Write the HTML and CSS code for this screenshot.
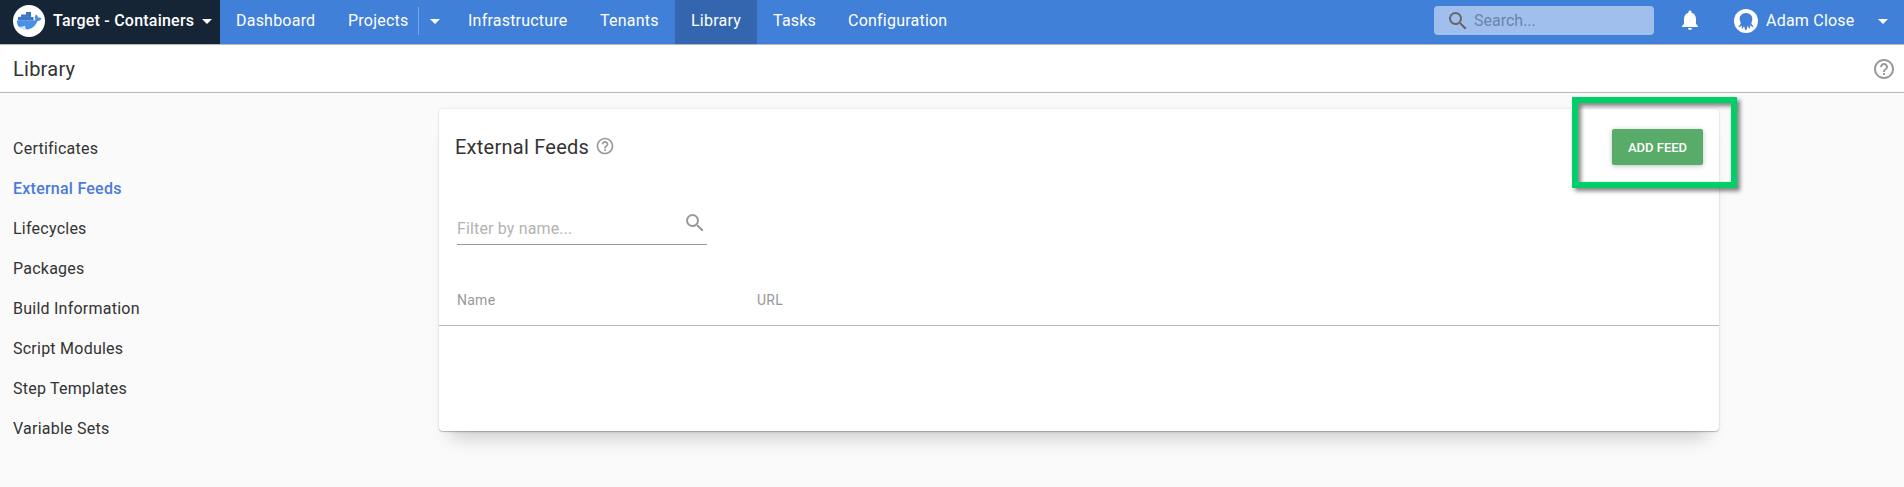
FILE: index.html
```html
<!DOCTYPE html>
<html lang="en">
<head>
<meta charset="utf-8">
<title>Library - External Feeds</title>
<link rel="stylesheet" href="styles.css">
</head>
<body>
<header class="navbar">
  <div class="space">
    <svg class="space-logo" width="32" height="32" viewBox="0 0 32 32"><circle cx="16" cy="16" r="16" fill="#fff"/><path fill="#4a8fe6" d="M4 15.500H21.500C22.600 15 22.400 13 21.700 11.600L23 9.500C24.500 10.500 25 11.500 25 12.700C26.500 12.400 27.600 12.800 28.500 13.600C27.800 15.300 26.300 16 24.500 15.900C22.500 21 18.500 24.500 12.500 24.500C7.500 24.500 3.600 21.500 4 15.500Z"/><path fill="#3c74c4" d="M5 15.500V12H8V9.500H13V7H18V12H20.500V15.500Z"/><path stroke="#4a8fe6" stroke-width=".3" d="M8 12v3.500M11 9.500v6M14.500 7v8.500M5 12h13M17.500 12v3.500"/><path fill="#fff" d="M5 21.500C7.500 22 10 21.600 12 20.400C12 22.500 13 24 14.500 24.600H9Z" opacity=".75"/></svg>
    <span class="space-name">Target - Containers</span>
    <svg class="caret" width="10" height="5" viewBox="0 0 10 5"><path d="M0 0h10L5 5z"/></svg>
  </div>
  <nav class="menu">
    <a class="item dashboard">Dashboard</a>
    <a class="item projects">Projects</a>
    <span class="split"><svg class="caret" width="10" height="5" viewBox="0 0 10 5"><path d="M0 0h10L5 5z"/></svg></span>
    <a class="item infrastructure">Infrastructure</a>
    <a class="item tenants">Tenants</a>
    <a class="item library active">Library</a>
    <a class="item tasks">Tasks</a>
    <a class="item">Configuration</a>
  </nav>
  <div class="search">
    <svg width="24" height="24" viewBox="0 0 24 24"><path d="M15.500 14h-.79l-.28-.27A6.471 6.471 0 0 0 16 9.500 6.500 6.500 0 1 0 9.500 16c1.610 0 3.090-.59 4.230-1.570l.27.28v.79l5 4.990L20.490 19l-4.990-5zm-6 0C7.010 14 5 11.990 5 9.500S7.010 5 9.500 5 14 7.010 14 9.500 11.990 14 9.500 14z"/></svg>
    <span>Search...</span>
  </div>
  <svg class="bell" width="24" height="24" viewBox="0 0 24 24"><path d="M12 22c1.100 0 2-.9 2-2h-4c0 1.100.89 2 2 2zm6-6v-5c0-3.070-1.640-5.640-4.500-6.320V4c0-.83-.67-1.500-1.500-1.500s-1.500.67-1.500 1.500v.68C7.630 5.360 6 7.920 6 11v5l-2 2v1h16v-1l-2-2z"/></svg>
  <svg class="avatar" width="24" height="24" viewBox="0 0 24 24"><circle cx="12" cy="12" r="12" fill="#fff"/><path fill="#4080d9" d="M12 4C7.800 4 5.300 7.100 5.700 10.500C6 13 7.300 13.800 6.300 15.500C5.700 16.500 4.300 17 4.500 17.800C5.500 18.300 7 17.500 8 16.500C8 18 7.200 19.300 8 19.700C9 19.500 9.500 18 10 17C10.500 18.500 10.800 21 11.900 21.200C13 21 13 18.500 13.500 17C14.500 18 14.700 19.800 15.700 19.500C16.500 19 15.800 17.500 15.800 16.300C17 17.300 18.500 18.300 19.500 17.800C19.700 17 18.500 16.500 17.800 15.500C16.800 13.800 18 13 18.300 10.500C18.700 7.100 16.200 4 12 4Z"/></svg>
  <span class="user">Adam Close</span>
  <svg class="caret" width="10" height="5" viewBox="0 0 10 5"><path d="M0 0h10L5 5z"/></svg>
</header>
<div class="titlebar">
  <h1>Library</h1>
  <svg class="help" width="24" height="24" viewBox="0 0 24 24"><path d="M11 18h2v-2h-2v2zm1-16C6.480 2 2 6.480 2 12s4.480 10 10 10 10-4.480 10-10S17.520 2 12 2zm0 18c-4.410 0-8-3.590-8-8s3.590-8 8-8 8 3.590 8 8-3.590 8-8 8zm0-14c-2.210 0-4 1.790-4 4h2c0-1.100.9-2 2-2s2 .9 2 2c0 2-3 1.750-3 5h2c0-2.250 3-2.500 3-5 0-2.210-1.790-4-4-4z"/></svg>
</div>
<main class="content">
  <aside class="sidebar">
    <a>Certificates</a>
    <a class="selected">External Feeds</a>
    <a>Lifecycles</a>
    <a>Packages</a>
    <a>Build Information</a>
    <a>Script Modules</a>
    <a>Step Templates</a>
    <a>Variable Sets</a>
  </aside>
  <section class="card">
    <div class="card-head">
      <h2>External Feeds</h2>
      <svg class="help" width="20" height="20" viewBox="0 0 24 24"><path d="M11 18h2v-2h-2v2zm1-16C6.480 2 2 6.480 2 12s4.480 10 10 10 10-4.480 10-10S17.520 2 12 2zm0 18c-4.410 0-8-3.590-8-8s3.590-8 8-8 8 3.590 8 8-3.590 8-8 8zm0-14c-2.210 0-4 1.790-4 4h2c0-1.100.9-2 2-2s2 .9 2 2c0 2-3 1.750-3 5h2c0-2.250 3-2.500 3-5 0-2.210-1.790-4-4-4z"/></svg>
      <div class="add">ADD FEED<span class="highlight"></span></div>
    </div>
    <div class="filter">
      <span>Filter by name...</span>
      <svg width="24" height="24" viewBox="0 0 24 24"><path d="M15.500 14h-.79l-.28-.27A6.471 6.471 0 0 0 16 9.500 6.500 6.500 0 1 0 9.500 16c1.610 0 3.090-.59 4.230-1.570l.27.28v.79l5 4.990L20.490 19l-4.990-5zm-6 0C7.010 14 5 11.990 5 9.500S7.010 5 9.500 5 14 7.010 14 9.500 11.990 14 9.500 14z"/></svg>
    </div>
    <div class="columns"><span>Name</span><span>URL</span></div>
  </section>
</main>
</body>
</html>
```
FILE: styles.css
```css
* { box-sizing: border-box; }
body {
  margin: 0;
  height: 487px;
  overflow: hidden;
  background: #fafafa;
  color: #333;
  font: 16px/24px Roboto, sans-serif;
}
svg { display: block; flex: none; }
span, a { white-space: nowrap; }
h1, h2 { margin: 0; font-size: 20px; font-weight: 400; letter-spacing: .25px; }

.navbar {
  display: flex;
  align-items: center;
  height: 45px;
  padding-right: 16px;
  padding-bottom: 1px;
  background: #4080d9;
  color: #fff;
  letter-spacing: .22px;
  box-shadow: inset 0 -1px #b8b8b8;
}
.caret { fill: #fff; margin-top: -1px; }
.space {
  display: flex;
  align-items: center;
  width: 220px;
  height: 44px;
  padding-left: 13px;
  background: #152535;
  font-weight: 500;
}
.space-logo { margin-top: -2px; }
.space-name { width: 149px; margin: -3px 0 0 8px; }
.menu { display: flex; align-items: center; flex: 1; height: 44px; }
.item { height: 44px; padding: 9px 0 0 16px; }
.dashboard { width: 112px; }
.projects { width: 86px; }
.infrastructure { width: 132px; }
.tenants { width: 91px; }
.library { width: 82px; }
.tasks { width: 75px; }
.active { background: #3466b0; }
.split {
  display: flex;
  align-items: center;
  height: 28px;
  width: 34px;
  margin-top: -2px;
  padding-left: 11px;
  border-left: 1px solid #79a6e4;
}
.split .caret { margin-top: 1px; }
.search {
  display: flex;
  align-items: center;
  width: 220px;
  height: 29px;
  margin-top: -3px;
  padding-left: 12px;
  border-radius: 4px;
  background: #a0bfec;
  color: #6b84a8;
}
.search svg { fill: #666; }
.search span { margin-left: 4px; letter-spacing: 0; }
.bell { margin: -4px 0 0 24px; fill: #fff; }
.avatar { margin: -2px 8px 0 32px; }
.user { width: 112px; margin-top: -3px; }

.titlebar {
  display: flex;
  align-items: center;
  justify-content: space-between;
  height: 48px;
  padding: 0 8px 0 13px;
  background: #fff;
  border-bottom: 1px solid #b8b8b8;
}
.help { fill: #999; }

.content { display: flex; align-items: flex-start; }
.sidebar {
  display: flex;
  flex-direction: column;
  gap: 16px;
  width: 439px;
  padding: 44px 0 0 13px;
  letter-spacing: .24px;
}
.selected { color: #4a7bd8; font-weight: 500; }
.card {
  width: 1280px;
  height: 322px;
  margin-top: 16px;
  border-radius: 4px;
  background: #fff;
  box-shadow: 0 1px 1px rgba(0,0,0,.22), 0 0 3px rgba(0,0,0,.12), 0 18px 18px -12px rgba(0,0,0,.2);
}
.card-head { display: flex; align-items: center; height: 76px; padding: 0 16px; }
.card-head .help { margin: -3px 0 0 6px; }
.add {
  position: relative;
  width: 91px;
  height: 36px;
  margin-left: auto;
  border-radius: 2px;
  background: #58ab69;
  color: #fff;
  font-size: 13px;
  font-weight: 500;
  line-height: 37px;
  text-align: center;
  box-shadow: 0 1px 5px rgba(0,0,0,.25);
}
.highlight {
  position: absolute;
  left: -40px;
  top: -32px;
  width: 165px;
  height: 91px;
  border: 6px solid #00cf67;
  filter: drop-shadow(3px 3px 2px rgba(0,0,0,.5));
}
.filter {
  display: flex;
  justify-content: space-between;
  width: 250px;
  height: 37px;
  margin: 23px 0 0 18px;
  border-bottom: 1px solid #999;
  color: #b3b3b3;
  letter-spacing: .15px;
}
.filter span { padding-top: 9px; }
.filter svg { margin-top: 3px; fill: #999; }
.columns {
  display: grid;
  grid-template-columns: 300px 1fr;
  height: 81px;
  padding: 43px 18px 0;
  border-bottom: 1px solid #b8b8b8;
  color: #999;
  font-size: 14px;
  letter-spacing: .25px;
}
```
